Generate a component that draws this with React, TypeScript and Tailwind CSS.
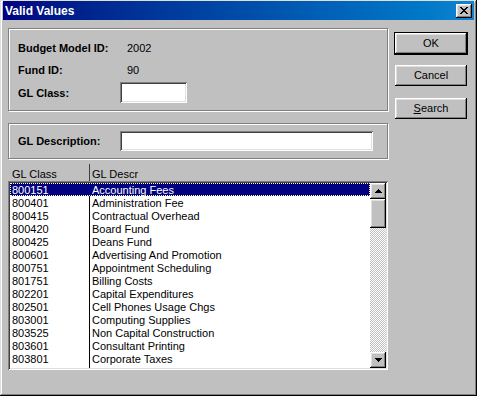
import React from "react";

const rows: [string, string][] = [
  ["800151", "Accounting Fees"],
  ["800401", "Administration Fee"],
  ["800415", "Contractual Overhead"],
  ["800420", "Board Fund"],
  ["800425", "Deans Fund"],
  ["800601", "Advertising And Promotion"],
  ["800751", "Appointment Scheduling"],
  ["801751", "Billing Costs"],
  ["802201", "Capital Expenditures"],
  ["802501", "Cell Phones Usage Chgs"],
  ["803001", "Computing Supplies"],
  ["803525", "Non Capital Construction"],
  ["803601", "Consultant Printing"],
  ["803801", "Corporate Taxes"],
  ["804005", "Data Processing Fees"],
];

const raised =
  "shadow-[inset_-1px_-1px_#000000,inset_1px_1px_#ffffff,inset_-2px_-2px_#808080,inset_2px_2px_#dfdfdf]";
const sunken =
  "shadow-[inset_1px_1px_#808080,inset_-1px_-1px_#ffffff,inset_2px_2px_#404040,inset_-2px_-2px_#dfdfdf]";
const etched = "border border-[#808080] shadow-[1px_1px_0_#ffffff,inset_1px_1px_0_#ffffff]";

function Btn({ children, def }: { children: React.ReactNode; def?: boolean }) {
  return (
    <div className={def ? "border border-black" : "p-[1px]"}>
      <div className={`h-[21px] w-[72px] flex items-center justify-center bg-[#c0c0c0] ${raised}`}>
        {children}
      </div>
    </div>
  );
}

export default function App() {
  return (
    <div
      className="w-[477px] h-[396px] bg-[#c0c0c0] pt-[1px] px-[3px] text-black text-[11px] leading-[13px] shadow-[inset_-1px_-1px_#000000,inset_1px_1px_#dfdfdf,inset_-2px_-2px_#808080,inset_2px_2px_#ffffff] overflow-hidden"
      style={{ fontFamily: '"Liberation Sans", Arial, sans-serif' }}
    >
      {/* title bar */}
      <div className="h-[19px] flex items-center justify-between pl-[2px] pr-[2px] bg-gradient-to-r from-[#000080] to-[#1084d0]">
        <span className="text-white font-bold text-[12px] leading-[14px]">Valid Values</span>
        <div className={`w-[16px] h-[14px] bg-[#c0c0c0] flex items-center justify-center ${raised}`}>
          <svg width="8" height="7" viewBox="0 0 8 7" shapeRendering="crispEdges">
            <path d="M0 0h2v1h-2zM6 0h2v1h-2zM1 1h2v1h-2zM5 1h2v1h-2zM2 2h4v1h-4zM3 3h2v1h-2zM2 4h4v1h-4zM1 5h2v1h-2zM5 5h2v1h-2zM0 6h2v1h-2zM6 6h2v1h-2z" fill="#000" />
          </svg>
        </div>
      </div>

      {/* content */}
      <div className="flex pt-[8px] pl-[5px] gap-[6px]">
        {/* left column */}
        <div className="w-[380px] flex flex-col">
          {/* group 1 */}
          <div className={`h-[83px] ${etched} pl-[9px] pt-[12px] flex flex-col`}>
            <div className="flex h-[13px] items-center pt-[1px]">
              <span className="w-[102px] font-bold">Budget Model ID:</span>
              <span className="pl-[7px]">2002</span>
            </div>
            <div className="flex h-[13px] items-center mt-[9px] pt-[1px]">
              <span className="w-[102px] font-bold">Fund ID:</span>
              <span className="pl-[7px]">90</span>
            </div>
            <div className="flex h-[21px] items-center mt-[6px]">
              <span className="w-[102px] font-bold pt-[1px]">GL Class:</span>
              <div className={`w-[67px] h-[21px] bg-white ${sunken}`} />
            </div>
          </div>

          {/* group 2 */}
          <div className={`h-[36px] mt-[12px] ${etched} pl-[9px] flex items-center`}>
            <span className="w-[102px] font-bold pt-[1px]">GL Description:</span>
            <div className={`w-[253px] h-[20px] bg-white ${sunken}`} />
          </div>

          {/* header */}
          <div className="h-[22px] flex items-end">
            <div className="w-[81px] pl-[4px]">GL Class</div>
            <div className="h-[17px] border-l border-[#404040] pl-[2px] flex items-end">GL Descr</div>
          </div>

          {/* list */}
          <div className={`h-[189px] p-[2px] bg-white ${sunken} flex`}>
            <div className="flex-1 overflow-hidden">
              {rows.map(([code, desc], i) => {
                const sel = i === 0;
                return (
                  <div
                    key={code}
                    className={
                      sel
                        ? "flex h-[13px] bg-[#000080] text-white outline-1 outline-dotted outline-offset-[-1px] outline-[#ffffc0]"
                        : "flex h-[13px]"
                    }
                  >
                    <div className="w-[79px] pl-[2px] pt-[1px] whitespace-nowrap">{code}</div>
                    <div
                      className={`pl-[2px] pt-[1px] border-l whitespace-nowrap ${sel ? "border-[#000080]" : "border-black"}`}
                    >
                      {desc}
                    </div>
                  </div>
                );
              })}
            </div>
            {/* scrollbar */}
            <div className="w-[16px] flex flex-col">
              <div className={`h-[16px] bg-[#c0c0c0] flex items-center justify-center ${raised}`}>
                <svg width="7" height="4" viewBox="0 0 7 4" shapeRendering="crispEdges">
                  <path d="M3 0h1v1h-1zM2 1h3v1h-3zM1 2h5v1h-5zM0 3h7v1h-7z" fill="#000" />
                </svg>
              </div>
              <div className={`h-[29px] bg-[#c0c0c0] ${raised}`} />
              <div className="flex-1 bg-[image:repeating-conic-gradient(#c0c0c0_0%_25%,#ffffff_0%_50%)] bg-[length:2px_2px]" />
              <div className={`h-[16px] bg-[#c0c0c0] flex items-center justify-center ${raised}`}>
                <svg width="7" height="4" viewBox="0 0 7 4" shapeRendering="crispEdges">
                  <path d="M0 0h7v1h-7zM1 1h5v1h-5zM2 2h3v1h-3zM3 3h1v1h-1z" fill="#000" />
                </svg>
              </div>
            </div>
          </div>
        </div>

        {/* buttons */}
        <div className="w-[74px] flex flex-col pt-[4px]">
          <Btn def>OK</Btn>
          <div className="mt-[9px]">
            <Btn>Cancel</Btn>
          </div>
          <div className="mt-[10px]">
            <Btn>
              <span>
                <span className="underline">S</span>earch
              </span>
            </Btn>
          </div>
        </div>
      </div>
    </div>
  );
}
